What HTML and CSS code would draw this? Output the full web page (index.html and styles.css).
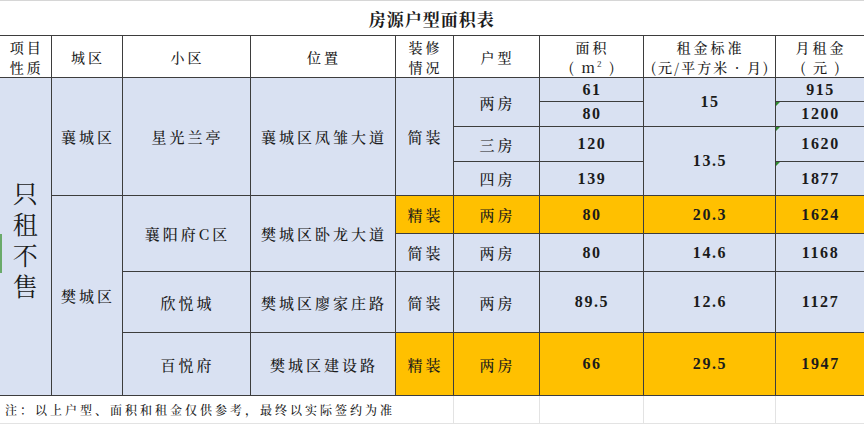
FILE: index.html
```html
<!DOCTYPE html>
<html lang="zh-CN">
<head>
<meta charset="utf-8">
<title>房源户型面积表</title>
<link rel="stylesheet" href="styles.css">
</head>
<body>
<table class="sheet">
  <colgroup>
    <col class="c1"><col class="c2"><col class="c3"><col class="c4"><col class="c5"><col class="c6"><col class="c7"><col class="c8"><col class="c9">
  </colgroup>
  <tr class="h-title">
    <td colspan="9" class="title">房源户型面积表</td>
  </tr>
  <tr class="h-head">
    <td class="head">项目<br>性质</td>
    <td class="head">城区</td>
    <td class="head">小区</td>
    <td class="head">位置</td>
    <td class="head">装修<br>情况</td>
    <td class="head">户型</td>
    <td class="head">面积<br><span class="paren">( m<sup>2</sup> )</span></td>
    <td class="head">租金标准<br><span class="paren">(元/平方米 · 月)</span></td>
    <td class="head">月租金<br><span class="paren">( 元 )</span></td>
  </tr>
  <tr class="h1">
    <td rowspan="8" class="big"><span class="vert">只租不售</span><span class="sel"></span></td>
    <td rowspan="4" class="txt">襄城区</td>
    <td rowspan="4" class="txt">星光兰亭</td>
    <td rowspan="4" class="txt">襄城区凤雏大道</td>
    <td rowspan="4" class="txt">简装</td>
    <td rowspan="2" class="txt">两房</td>
    <td class="num">61</td>
    <td rowspan="2" class="num">15</td>
    <td class="num">915</td>
  </tr>
  <tr class="h2">
    <td class="num">80</td>
    <td class="num mark">1200</td>
  </tr>
  <tr class="h3">
    <td class="txt">三房</td>
    <td class="num">120</td>
    <td rowspan="2" class="num">13.5</td>
    <td class="num mark">1620</td>
  </tr>
  <tr class="h4">
    <td class="txt">四房</td>
    <td class="num">139</td>
    <td class="num mark">1877</td>
  </tr>
  <tr class="h5">
    <td rowspan="4" class="txt">樊城区</td>
    <td rowspan="2" class="txt">襄阳府C区</td>
    <td rowspan="2" class="txt">樊城区卧龙大道</td>
    <td class="txt hl">精装</td>
    <td class="txt hl">两房</td>
    <td class="num hl">80</td>
    <td class="num hl">20.3</td>
    <td class="num hl">1624</td>
  </tr>
  <tr class="h6">
    <td class="txt">简装</td>
    <td class="txt">两房</td>
    <td class="num">80</td>
    <td class="num">14.6</td>
    <td class="num">1168</td>
  </tr>
  <tr class="h7">
    <td class="txt">欣悦城</td>
    <td class="txt">樊城区廖家庄路</td>
    <td class="txt">简装</td>
    <td class="txt">两房</td>
    <td class="num">89.5</td>
    <td class="num">12.6</td>
    <td class="num">1127</td>
  </tr>
  <tr class="h8">
    <td class="txt">百悦府</td>
    <td class="txt">樊城区建设路</td>
    <td class="txt hl">精装</td>
    <td class="txt hl">两房</td>
    <td class="num hl">66</td>
    <td class="num hl">29.5</td>
    <td class="num hl">1947</td>
  </tr>
  <tr class="h-foot">
    <td colspan="5" class="note">注：以上户型、面积和租金仅供参考，最终以实际签约为准</td>
    <td class="grid"></td>
    <td class="grid"></td>
    <td class="grid"></td>
    <td class="grid"></td>
  </tr>
</table>
</body>
</html>
```
FILE: styles.css
```css
html, body {
  margin: 0;
  padding: 0;
  background: #ffffff;
}

.sheet {
  border-collapse: collapse;
  table-layout: fixed;
  width: 864px;
  font-family: "Noto Serif CJK SC", "Noto Sans CJK SC", sans-serif;
  color: #1b1b1b;
}

.c1 { width: 51px; }
.c2 { width: 71px; }
.c3 { width: 128px; }
.c4 { width: 145px; }
.c5 { width: 58px; }
.c6 { width: 86px; }
.c7 { width: 104px; }
.c8 { width: 132px; }
.c9 { width: 89px; }

.sheet td {
  padding: 0;
  text-align: center;
  vertical-align: middle;
  border: 1px solid #3d3d3d;
  background: #d9e1f2;
  overflow: visible;
  white-space: nowrap;
}

.h-title { height: 35px; }
.h-head { height: 42px; }
.h1 { height: 24px; }
.h2 { height: 25px; }
.h3 { height: 35px; }
.h4 { height: 34px; }
.h5 { height: 38px; }
.h6 { height: 38px; }
.h7 { height: 61px; }
.h8 { height: 63px; }
.h-foot { height: 28px; }

.sheet td.title {
  background: #ffffff;
  border-top: 1px solid #d6d6d6;
  border-left: none;
  border-right: 1px solid #d6d6d6;
  font-size: 17px;
  font-weight: 700;
  letter-spacing: 1px;
  padding-top: 1px;
}

.sheet td.head {
  background: #ffffff;
  font-size: 14px;
  font-weight: 500;
  line-height: 20px;
  letter-spacing: 3px;
  padding-left: 3px;
}

.sheet td.head .paren {
  letter-spacing: 2px;
}

.sheet td.head sup {
  font-size: 8px;
  line-height: 0;
  vertical-align: 6px;
}

.sheet td:first-child {
  border-left: none;
}

.sheet td:last-child {
  border-right: 1px solid #d6d6d6;
}

.txt {
  font-size: 15px;
  font-weight: 500;
  letter-spacing: 3px;
  padding-left: 3px !important;
}

.num {
  font-family: "Liberation Serif", "Times New Roman", serif;
  font-size: 16px;
  font-weight: 700;
  letter-spacing: 1.6px;
  padding-left: 2px !important;
}

.sheet td.hl {
  background: #ffc000;
}

.big {
  position: relative;
}

.vert {
  display: block;
  width: 26px;
  margin: 0 auto;
  font-size: 25px;
  line-height: 31px;
  white-space: normal;
  word-break: break-all;
  padding-top: 4px;
}

.sel {
  position: absolute;
  left: 0;
  top: 156px;
  width: 2px;
  height: 39px;
  background: #6aaa6a;
}

.mark {
  position: relative;
}

.mark::before {
  content: "";
  position: absolute;
  left: 0;
  top: 0;
  border-top: 4px solid #2f8a2f;
  border-right: 4px solid transparent;
}

.sheet td.note {
  background: #ffffff;
  text-align: left;
  font-size: 12px;
  font-weight: 500;
  letter-spacing: 3px;
  padding-left: 5px;
  border-left: none;
  border-right: 1px solid #e3e3e3;
  border-bottom: 1px solid #e3e3e3;
}

.sheet td.grid {
  background: #ffffff;
  border-left: 1px solid #e3e3e3;
  border-right: 1px solid #e3e3e3;
  border-bottom: 1px solid #e3e3e3;
}
```
